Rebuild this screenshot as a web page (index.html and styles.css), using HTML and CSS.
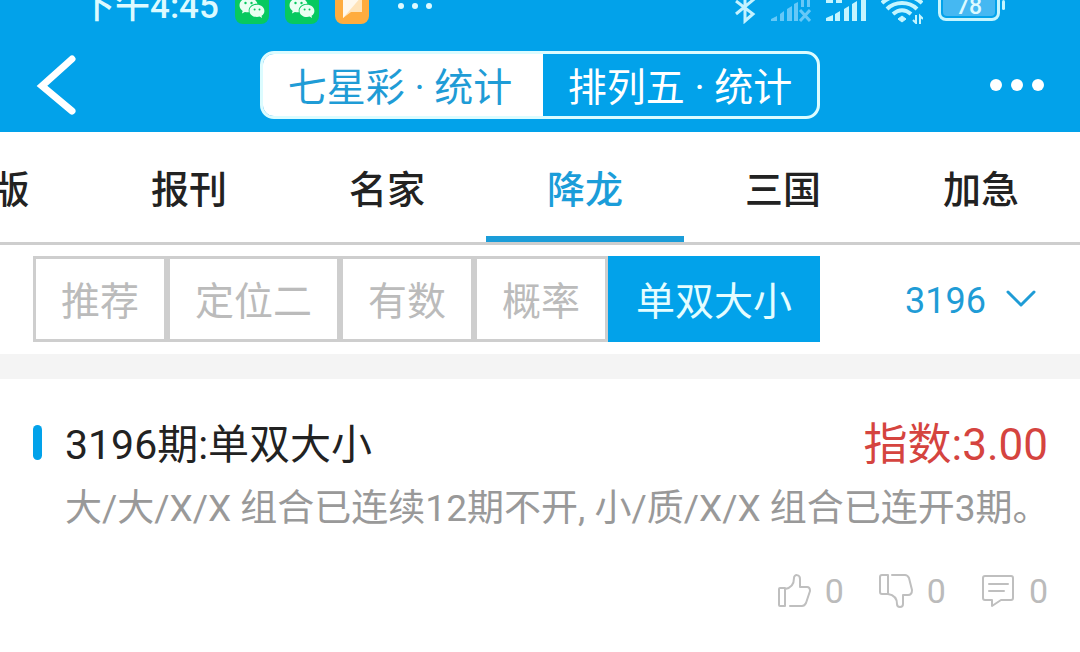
FILE: index.html
```html
<!DOCTYPE html>
<html lang="zh-CN">
<head>
<meta charset="utf-8">
<meta name="viewport" content="width=device-width, initial-scale=1">
<title>排列五 · 统计</title>
<link rel="stylesheet" href="styles.css">
</head>
<body>
<header class="header">
  <div class="status">
    <div class="status-group">
      <span class="time">下午4:45</span>
      <svg class="app" viewBox="0 0 34 34" width="34" height="34" aria-hidden="true">
        <rect width="34" height="34" rx="8" fill="#07c95f"/>
        <path fill="#e9fff2" d="M13.500 8C8.500 8 4.500 11.200 4.500 15.300c0 2.300 1.300 4.300 3.200 5.600l-.8 2.500 3-1.500c1.400.4 2.800.5 4 .4-1.200-5 3-8.800 8.500-8.600C21.600 10.200 18 8 13.500 8z"/>
        <path fill="#e9fff2" d="M22 14.800c-4.200 0-7.500 2.700-7.500 6.100s3.300 6.100 7.500 6.100c.9 0 1.800-.1 2.600-.4l2.500 1.300-.6-2.100c1.800-1.200 2.900-2.900 2.900-4.900 0-3.400-3.200-6.100-7.400-6.100z"/>
        <g fill="#07c95f"><circle cx="10.500" cy="13" r="1.200"/><circle cx="16.500" cy="13" r="1.200"/><circle cx="19.600" cy="19.500" r="1"/><circle cx="24.500" cy="19.500" r="1"/></g>
      </svg>
      <svg class="app" viewBox="0 0 34 34" width="34" height="34" aria-hidden="true">
        <rect width="34" height="34" rx="8" fill="#07c95f"/>
        <path fill="#e9fff2" d="M13.500 8C8.500 8 4.500 11.200 4.500 15.300c0 2.300 1.300 4.300 3.200 5.600l-.8 2.500 3-1.500c1.400.4 2.800.5 4 .4-1.200-5 3-8.800 8.500-8.600C21.600 10.200 18 8 13.500 8z"/>
        <path fill="#e9fff2" d="M22 14.800c-4.200 0-7.500 2.700-7.500 6.100s3.300 6.100 7.500 6.100c.9 0 1.800-.1 2.600-.4l2.500 1.300-.6-2.100c1.800-1.200 2.900-2.900 2.900-4.900 0-3.400-3.200-6.100-7.400-6.100z"/>
        <g fill="#07c95f"><circle cx="10.500" cy="13" r="1.200"/><circle cx="16.500" cy="13" r="1.200"/><circle cx="19.600" cy="19.500" r="1"/><circle cx="24.500" cy="19.500" r="1"/></g>
      </svg>
      <svg class="app" viewBox="0 0 34 34" width="34" height="34" aria-hidden="true">
        <rect width="34" height="34" rx="8" fill="#ffac3e"/>
        <path fill="#ffe3b8" d="M8 6h19v16H16l-8 6z"/>
        <path fill="#fff8ec" d="M8 6h19L8 28z"/>
      </svg>
      <svg class="more-apps" viewBox="0 0 36 34" width="36" height="34" fill="#dcfaff" aria-hidden="true">
        <circle cx="4" cy="16" r="3"/><circle cx="18" cy="16" r="3"/><circle cx="32" cy="16" r="3"/>
      </svg>
    </div>
    <div class="status-group signals">
      <svg viewBox="0 0 22 34" width="22" height="34" fill="none" stroke="#c4f2ff" stroke-width="3" aria-hidden="true">
        <path d="M2 11l17 13-8 7V3l8 7L2 24"/>
      </svg>
      <svg viewBox="0 0 40 34" width="40" height="34" fill="#66c8f7" aria-hidden="true">
        <path d="M0 31v-2l6-3v5zM9 24l4-3v10H9zM16 19l5-3v15h-5zM23 14l4-2v19h-4zM30 10h3v7h-3zM36 6h3v11h-3z"/>
        <path d="M29 20l10 11M39 20l-10 11" stroke="#66c8f7" stroke-width="3"/>
      </svg>
      <svg viewBox="0 0 40 34" width="40" height="34" fill="#c4f5ff" aria-hidden="true">
        <path d="M0 31v-3l7-3v6zM9 24l5-3v10H9zM18 19l5-3v15h-5zM26 14l5-3v20h-5zM35 8l5-3v26h-5zM0 8h7v5H0zM10 8h6v5h-6z"/>
      </svg>
      <svg viewBox="0 0 42 34" width="42" height="34" fill="none" stroke="#c4f5ff" stroke-width="4" aria-hidden="true">
        <path d="M1 13c11-10 29-10 40 0M6 19c8-8 22-8 30 0M12 24c6-5 12-5 18 0"/>
        <path d="M21 26l4 3-4 3-4-3z" fill="#c4f5ff" stroke-width="1"/>
        <path d="M35 25v8l-3-3M39 34v-8l3 3" stroke-width="2"/>
      </svg>
      <span class="battery"><span class="battery-level">78</span></span>
    </div>
  </div>
  <div class="bar">
    <button class="icon-button back" type="button" aria-label="返回">
      <svg viewBox="0 0 40 60" width="40" height="60" fill="none" stroke="#fff" aria-hidden="true"><path d="M36 4L6 31l30 25" stroke-width="7" stroke-linecap="round"/></svg>
    </button>
    <div class="segments">
      <button class="segment selected" type="button">七星彩 · 统计</button>
      <button class="segment" type="button">排列五 · 统计</button>
    </div>
    <button class="icon-button more" type="button" aria-label="更多">
      <svg viewBox="0 0 54 12" width="54" height="12" fill="#fff" aria-hidden="true"><circle cx="6" cy="6" r="6"/><circle cx="27" cy="6" r="6"/><circle cx="48" cy="6" r="6"/></svg>
    </button>
  </div>
</header>
<nav class="tabs">
  <a class="tab clipped" href="#">版</a>
  <a class="tab" href="#">报刊</a>
  <a class="tab" href="#">名家</a>
  <a class="tab active" href="#" aria-current="page">降龙</a>
  <a class="tab" href="#">三国</a>
  <a class="tab" href="#">加急</a>
</nav>
<div class="filters">
  <div class="filter-list">
    <button class="filter" type="button">推荐</button>
    <button class="filter" type="button">定位二</button>
    <button class="filter" type="button">有数</button>
    <button class="filter" type="button">概率</button>
    <button class="filter chosen" type="button">单双大小</button>
  </div>
  <label class="issue">
    <select class="issue-select" aria-label="期号"><option>3196</option></select>
    <svg viewBox="0 0 30 18" width="30" height="18" fill="none" stroke="#1f9cd6" stroke-width="3" stroke-linecap="round" stroke-linejoin="round" aria-hidden="true"><path d="M2 2l13 13L28 2"/></svg>
  </label>
</div>
<main class="content">
  <article class="post">
    <div class="post-head">
      <h1 class="post-title">3196期:单双大小</h1>
      <span class="score">指数:3.00</span>
    </div>
    <p class="summary">大/大/X/X 组合已连续12期不开, 小/质/X/X 组合已连开3期。</p>
    <div class="actions">
      <button class="action" type="button" aria-label="赞 0">
        <svg viewBox="0 0 34 34" width="34" height="34" aria-hidden="true"><path d="M3 14h5v18H3a1 1 0 0 1-1-1V15a1 1 0 0 1 1-1zM8 15c6-1 9-5 9-11 0-4 6-4 6 1v8h7c2 0 3 2 3 4l-4 12c-1 2-2 3-4 3H13"/></svg>
        <span>0</span>
      </button>
      <button class="action" type="button" aria-label="踩 0">
        <svg viewBox="0 0 34 34" width="34" height="34" aria-hidden="true"><path d="M3 1h6v19H3a2 2 0 0 1-2-2V3a2 2 0 0 1 2-2zM13 1h13c2 0 3 1 4 3l3 12c0 3-1 5-4 5h-5v9c0 4-6 4-6 0 0-6-3-9-9-10"/></svg>
        <span>0</span>
      </button>
      <button class="action" type="button" aria-label="评论 0">
        <svg viewBox="0 0 34 34" width="34" height="34" aria-hidden="true"><path d="M4 2h26a2 2 0 0 1 2 2v20a2 2 0 0 1-2 2H20l-9 6v-6H4a2 2 0 0 1-2-2V4a2 2 0 0 1 2-2zM8 10h19M8 17h15"/></svg>
        <span>0</span>
      </button>
    </div>
  </article>
</main>
</body>
</html>
```
FILE: styles.css
```css
* { box-sizing: border-box; }

body {
  margin: 0;
  overflow-x: hidden;
  background: #fff;
  color: #222;
  font-family: Roboto, "Noto Sans CJK SC", sans-serif;
}

button, select {
  margin: 0;
  padding: 0;
  border: 0;
  background: none;
  color: inherit;
  font: inherit;
}

svg { display: block; flex: none; }

.header {
  margin-top: -18px;
  background: #02a2ea;
  color: #fff;
}

.status {
  display: flex;
  justify-content: space-between;
  height: 42px;
  padding: 0 80px 0 80px;
}

.status-group {
  display: flex;
  align-items: flex-end;
  gap: 16px;
}

.signals { gap: 15px; }

.time {
  align-self: flex-start;
  color: #dcfaff;
  font-size: 35px;
  font-weight: 500;
  line-height: 50px;
}

.more-apps { margin-left: 12px; }

.battery {
  position: relative;
  width: 62px;
  height: 36px;
  margin-bottom: 3px;
  padding: 2px;
  border: 3px solid #c4f5ff;
  border-radius: 8px;
}

.battery::after {
  content: "";
  position: absolute;
  top: 12px;
  right: -8px;
  width: 3px;
  height: 10px;
  border-radius: 2px;
  background: #c4f5ff;
}

.battery-level {
  display: block;
  height: 26px;
  border-radius: 4px;
  background: #45b8f2;
  color: #dcfaff;
  font-size: 23px;
  font-weight: 500;
  line-height: 34px;
  text-align: center;
}

.bar {
  display: grid;
  grid-template-columns: 1fr 560px 1fr;
  align-items: center;
  padding: 27px 36px 13px;
}

.back { justify-self: start; }
.more { justify-self: end; }

.segments {
  display: flex;
  height: 68px;
  border: 3px solid #dcfcff;
  border-radius: 14px;
  overflow: hidden;
}

.segment {
  flex: 1;
  padding-top: 6px;
  font-size: 39px;
  line-height: 56px;
  white-space: nowrap;
}

.segment.selected {
  flex: 0 0 280px;
  padding-right: 6px;
  background: #fff;
  color: #1f9cd6;
}

.tabs {
  display: flex;
  justify-content: flex-end;
  overflow: hidden;
  border-bottom: 3px solid #cecece;
}

.tab {
  flex: 0 0 198px;
  height: 110px;
  border-bottom: 6px solid transparent;
  color: #222;
  font-size: 38px;
  font-weight: 500;
  line-height: 116px;
  text-align: center;
  text-decoration: none;
}

.tab.clipped { padding-left: 39px; }

.tab.active {
  border-color: #1b9dd9;
  color: #1b9dd9;
}

.filters {
  display: flex;
  justify-content: space-between;
  align-items: center;
  padding: 11px 44px 12px 33px;
  border-bottom: 25px solid #f4f4f4;
}

.filter-list { display: flex; }

.filter {
  height: 86px;
  padding: 6px 25px 0;
  border: 3px solid #cecece;
  color: #bbb;
  font-size: 39px;
  line-height: 74px;
  white-space: nowrap;
}

.filter.chosen {
  border-color: #02a2ea;
  background: #02a2ea;
  color: #e4fdff;
}

.issue {
  display: flex;
  align-items: center;
  gap: 20px;
  color: #1f9cd6;
}

.issue-select {
  appearance: none;
  padding-top: 4px;
  font-size: 36px;
  line-height: 56px;
}

.content { padding: 36px 32px 40px 33px; }

.post { padding-left: 32px; }

.post-head {
  display: flex;
  justify-content: space-between;
  align-items: center;
}

.post-title {
  position: relative;
  margin: 0;
  font-size: 41px;
  font-weight: 400;
  line-height: 56px;
}

.post-title::before {
  content: "";
  position: absolute;
  top: 8px;
  left: -32px;
  width: 9px;
  height: 35px;
  border-radius: 5px;
  background: #02a2ea;
}

.score {
  color: #d5443f;
  font-size: 44px;
  line-height: 60px;
}

.summary {
  margin: 8px 0 0;
  color: #999;
  font-size: 37px;
  line-height: 52px;
  white-space: nowrap;
}

.actions {
  display: flex;
  justify-content: flex-end;
  gap: 35px;
  margin-top: 32px;
}

.action {
  display: flex;
  align-items: center;
  gap: 14px;
  color: #bbb;
  font-size: 34px;
  line-height: 48px;
}

.action svg {
  fill: none;
  stroke: #bfbfbf;
  stroke-width: 2;
  stroke-linecap: round;
  stroke-linejoin: round;
}
```
